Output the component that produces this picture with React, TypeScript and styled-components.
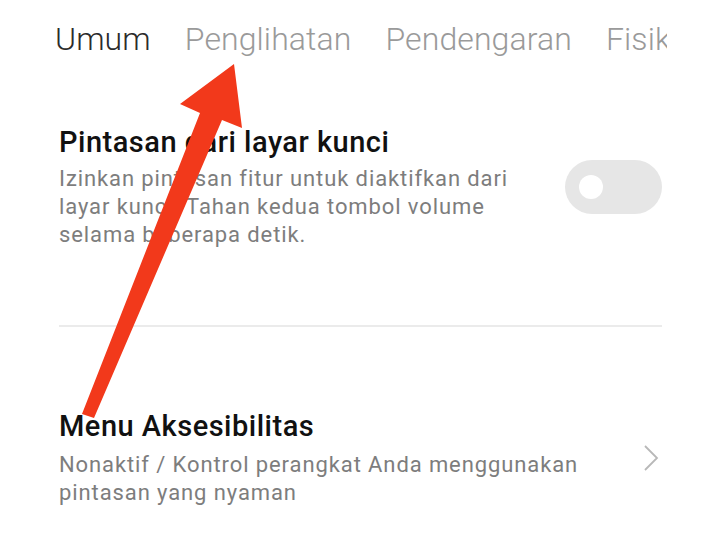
import styled, { createGlobalStyle } from 'styled-components';

const Global = createGlobalStyle`
  html, body {
    margin: 0;
    padding: 0;
    background: #ffffff;
  }
  body {
    font-family: Roboto, "Noto Sans", "Liberation Sans", sans-serif;
    -webkit-font-smoothing: antialiased;
  }
`;

const Screen = styled.div`
  position: relative;
  width: 720px;
  height: 540px;
  overflow: hidden;
  background: #fff;
`;

const Tabs = styled.nav`
  display: flex;
  gap: 34px;
  padding: 19px 0 0 55px;
  width: 612px;
  overflow: hidden;
  white-space: nowrap;
`;

const Tab = styled.span<{ $active?: boolean }>`
  font-size: 32px;
  line-height: 40px;
  font-weight: 300;
  letter-spacing: 0.1px;
  color: ${(p) => (p.$active ? '#2b2b2b' : '#9a9a9a')};
`;

const List = styled.div`
  padding: 0 58px 0 59px;
`;

const Row = styled.div<{ $top: number; $bottom: number }>`
  display: flex;
  align-items: center;
  gap: 24px;
  padding: ${(p) => p.$top}px 0 ${(p) => p.$bottom}px;
`;

const Text = styled.div`
  flex: 1;
  min-width: 0;
`;

const Title = styled.div`
  font-size: 29px;
  line-height: 34px;
  font-weight: 500;
  letter-spacing: 0.5px;
  color: #111;
`;

const Desc = styled.div<{ $width: number; $gap: number }>`
  margin-top: ${(p) => p.$gap}px;
  max-width: ${(p) => p.$width}px;
  font-size: 22px;
  line-height: 28px;
  letter-spacing: 0.9px;
  color: #7d7d7d;
`;

const Toggle = styled.div`
  flex: none;
  width: 97px;
  height: 54px;
  border-radius: 27px;
  background: #e6e6e6;
  display: flex;
  align-items: center;
  padding-left: 14px;
  box-sizing: border-box;
`;

const Knob = styled.div`
  width: 24px;
  height: 24px;
  border-radius: 50%;
  background: #fff;
`;

const Divider = styled.hr`
  margin: 0;
  border: none;
  border-top: 2px solid #ebebeb;
`;

const Chevron = styled.svg`
  flex: none;
  width: 18px;
  height: 28px;
  margin-right: 2px;
`;

const Arrow = styled.svg`
  position: absolute;
  left: 0;
  top: 0;
  pointer-events: none;
`;

export default function App() {
  return (
    <Screen>
      <Global />
      <Tabs>
        <Tab $active>Umum</Tab>
        <Tab>Penglihatan</Tab>
        <Tab>Pendengaran</Tab>
        <Tab>Fisik</Tab>
      </Tabs>
      <List>
        <Row $top={66} $bottom={76}>
          <Text>
            <Title>Pintasan dari layar kunci</Title>
            <Desc $width={450} $gap={6}>
              Izinkan pintasan fitur untuk diaktifkan dari layar kunci. Tahan kedua tombol volume
              selama beberapa detik.
            </Desc>
          </Text>
          <Toggle>
            <Knob />
          </Toggle>
        </Row>
        <Divider />
        <Row $top={82} $bottom={30}>
          <Text>
            <Title>Menu Aksesibilitas</Title>
            <Desc $width={540} $gap={8}>
              Nonaktif / Kontrol perangkat Anda menggunakan pintasan yang nyaman
            </Desc>
          </Text>
          <Chevron viewBox="0 0 18 28">
            <path d="M3 2 L15 14 L3 26" fill="none" stroke="#b8b8b8" strokeWidth="1.8" />
          </Chevron>
        </Row>
      </List>
      <Arrow width="720" height="540" viewBox="0 0 720 540">
        <polygon
          points="234,64 242,128 222,120 94,418 82,414 200,113 180,104"
          fill="#f2391b"
        />
      </Arrow>
    </Screen>
  );
}
